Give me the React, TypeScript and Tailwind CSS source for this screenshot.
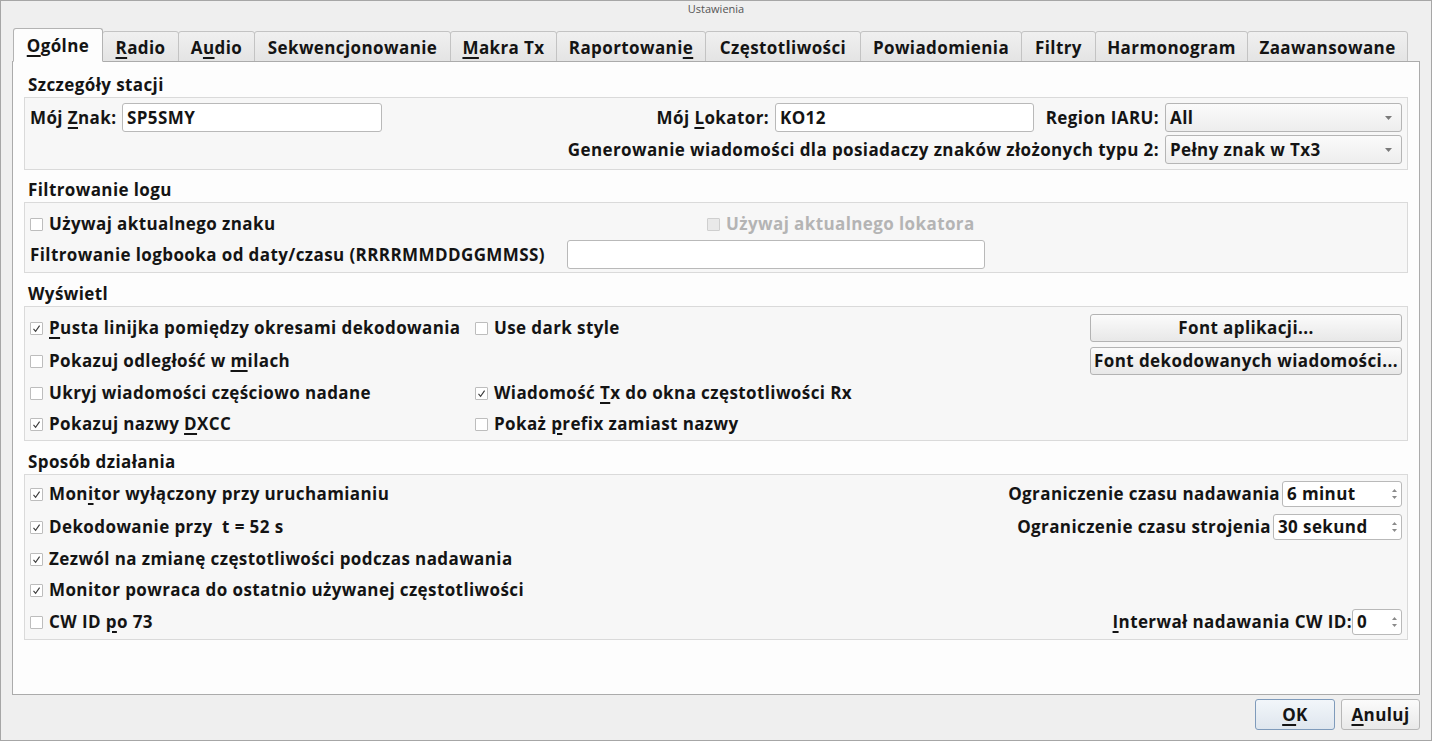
import React from 'react';

const U: React.FC<{ children: React.ReactNode }> = ({ children }) => (
    <span className="underline decoration-2 underline-offset-[3px]">{children}</span>
);

const CheckBox: React.FC<{ checked?: boolean; disabled?: boolean; children: React.ReactNode }> = ({ checked, disabled, children }) => (
    <div className={`flex items-center gap-[6px] whitespace-nowrap ${disabled ? 'text-[#b4b4b4]' : ''}`}>
        <span className={`w-[13px] h-[13px] border rounded-[1px] flex items-center justify-center ${disabled ? 'bg-[#e9e9e9] border-[#cfcfcf]' : 'bg-white border-[#bdbdbd]'}`}>
            {checked && (
                <svg width="9" height="9" viewBox="0 0 9 9">
                    <path d="M1.5 4.8 L3.6 7.4 L7.6 1.6" fill="none" stroke="#3a3a3a" strokeWidth="1.1" />
                </svg>
            )}
        </span>
        <span>{children}</span>
    </div>
);

const TextBox: React.FC<{ value?: string; className?: string }> = ({ value, className }) => (
    <div className={`h-[29px] border border-[#b9b9b9] rounded-[3px] bg-white px-[4px] flex items-center ${className ?? ''}`}>
        {value}
    </div>
);

const Combo: React.FC<{ value: string }> = ({ value }) => (
    <div className="w-[237px] h-[29px] border border-[#b5b5b5] rounded-[3px] bg-gradient-to-b from-[#fbfbfb] to-[#ededed] pl-[4px] pr-[9px] flex items-center justify-between">
        <span>{value}</span>
        <svg width="7" height="4" viewBox="0 0 7 4">
            <path d="M0 0 L7 0 L3.5 4 Z" fill="#7a7a7a" />
        </svg>
    </div>
);

const SpinBox: React.FC<{ value: string; className: string }> = ({ value, className }) => (
    <div className={`h-[26px] border border-[#b9b9b9] rounded-[3px] bg-white pl-[4px] pr-[3px] flex items-center justify-between ${className}`}>
        <span>{value}</span>
        <svg width="7" height="14" viewBox="0 0 7 14">
            <path d="M1 5 L3.5 2 L6 5 Z" fill="#8a8a8a" />
            <path d="M1 9 L3.5 12 L6 9 Z" fill="#8a8a8a" />
        </svg>
    </div>
);

const Section: React.FC<{ title: string; frame: string; children: React.ReactNode }> = ({ title, frame, children }) => (
    <div>
        <div className="h-[24px] flex items-center pl-[15px]">{title}</div>
        <div className={`mx-[11px] border border-[#dadada] bg-[#f7f7f7] ${frame}`}>{children}</div>
    </div>
);

const tabs: { label: React.ReactNode; w: string }[] = [
    { label: <><U>O</U>gólne</>, w: 'w-[90px]' },
    { label: <><U>R</U>adio</>, w: 'w-[77px]' },
    { label: <>A<U>u</U>dio</>, w: 'w-[77px]' },
    { label: 'Sekwencjonowanie', w: 'w-[197px]' },
    { label: <><U>M</U>akra Tx</>, w: 'w-[107px]' },
    { label: <>Raportowani<U>e</U></>, w: 'w-[150px]' },
    { label: 'Częstotliwości', w: 'w-[156px]' },
    { label: 'Powiadomienia', w: 'w-[162px]' },
    { label: 'Filtry', w: 'w-[75px]' },
    { label: 'Harmonogram', w: 'w-[153px]' },
    { label: 'Zaawansowane', w: 'w-[161px]' },
];

const btn = 'border border-[#b3b3b3] rounded-[3px] bg-gradient-to-b from-[#fbfbfb] to-[#e8e8e8] font-bold whitespace-nowrap';

const App: React.FC = () => {
    return (
        <div className="w-[1432px] h-[741px] bg-[#efefef] border border-[#a6a6a6] flex flex-col font-['Open_Sans','Noto_Sans',sans-serif] font-bold text-[17px] tracking-[0.4px] text-[#141414] overflow-hidden">
            {/* Title bar */}
            <div className="h-[17px] flex items-center justify-center text-[11px] font-normal tracking-normal text-[#555]">Ustawienia</div>

            {/* Tabs */}
            <div className="mt-[11px] pl-[12px] flex items-end h-[33px]">
                {tabs.map((t, i) => (
                    <div
                        key={i}
                        className={`${t.w} flex items-center justify-center pt-[2px] border rounded-t-[3px] -ml-px first:ml-0 whitespace-nowrap ${i === 0 ? 'h-[34px] bg-[#fdfdfd] border-[#b3b3b3] border-b-[#fdfdfd] relative z-10' : 'h-[31px] border-[#c3c3c3] bg-gradient-to-b from-[#f0f0f0] to-[#e4e4e4]'}`}
                    >
                        {t.label}
                    </div>
                ))}
            </div>

            {/* Pane */}
            <div className="mx-[11px] -mt-px h-[634px] border border-[#ababab] bg-[#fdfdfd] pt-[11px]">
                <Section title="Szczegóły stacji" frame="h-[73px] px-[5px] pt-[5px] flex flex-col gap-[3px]">
                    <div className="flex items-center h-[29px]">
                        <div className="w-[92px] whitespace-nowrap">Mój <U>Z</U>nak:</div>
                        <TextBox value="SP5SMY" className="w-[260px]" />
                        <div className="flex-1 text-right pr-[6px] whitespace-nowrap">Mój <U>L</U>okator:</div>
                        <TextBox value="KO12" className="w-[259px]" />
                        <div className="w-[131px] text-right pr-[6px] whitespace-nowrap">Region IARU:</div>
                        <Combo value="All" />
                    </div>
                    <div className="flex items-center h-[29px]">
                        <div className="flex-1 text-right pr-[6px] whitespace-nowrap">Generowanie wiadomości dla posiadaczy znaków złożonych typu 2:</div>
                        <Combo value="Pełny znak w Tx3" />
                    </div>
                </Section>

                <div className="h-[8px]" />
                <Section title="Filtrowanie logu" frame="h-[71px] px-[5px] pt-[5px]">
                    <div className="flex items-center h-[32px]">
                        <div className="w-[677px]">
                            <CheckBox>Używaj aktualnego znaku</CheckBox>
                        </div>
                        <CheckBox disabled>Używaj aktualnego lokatora</CheckBox>
                    </div>
                    <div className="flex items-center h-[29px]">
                        <div className="w-[537px] whitespace-nowrap">Filtrowanie logbooka od daty/czasu (RRRRMMDDGGMMSS)</div>
                        <TextBox className="w-[418px]" />
                    </div>
                </Section>

                <div className="h-[9px]" />
                <Section title="Wyświetl" frame="h-[135px] px-[5px] pt-[5px]">
                    <div className="grid grid-cols-[445px_615px_312px] grid-rows-[32px_34px_30px_32px] items-center">
                        <CheckBox checked><U>P</U>usta linijka pomiędzy okresami dekodowania</CheckBox>
                        <CheckBox>Use dark style</CheckBox>
                        <button className={`h-[28px] ${btn}`}>Font aplikacji...</button>

                        <CheckBox>Pokazuj odległość w <U>m</U>ilach</CheckBox>
                        <div />
                        <button className={`h-[28px] ${btn}`}>Font dekodowanych wiadomości...</button>

                        <CheckBox>Ukryj wiadomości częściowo nadane</CheckBox>
                        <CheckBox checked>Wiadomość <U>T</U>x do okna częstotliwości Rx</CheckBox>
                        <div />

                        <CheckBox checked>Pokazuj nazwy <U>D</U>XCC</CheckBox>
                        <CheckBox>Pokaż <U>p</U>refix zamiast nazwy</CheckBox>
                        <div />
                    </div>
                </Section>

                <div className="h-[9px]" />
                <Section title="Sposób działania" frame="h-[166px] px-[5px] pt-[3px]">
                    <div className="flex items-center justify-between h-[32px]">
                        <CheckBox checked>Mon<U>i</U>tor wyłączony przy uruchamianiu</CheckBox>
                        <div className="flex items-center gap-[2px]">
                            <span className="whitespace-nowrap">Ograniczenie czasu nadawania</span>
                            <SpinBox value="6 minut" className="w-[120px]" />
                        </div>
                    </div>
                    <div className="flex items-center justify-between h-[34px]">
                        <CheckBox checked>Dekodowanie przy&nbsp; t = 52 s</CheckBox>
                        <div className="flex items-center gap-[2px]">
                            <span className="whitespace-nowrap">Ograniczenie czasu strojenia</span>
                            <SpinBox value="30 sekund" className="w-[129px]" />
                        </div>
                    </div>
                    <div className="flex items-center h-[30px]">
                        <CheckBox checked>Zezwól na zmianę częstotliwości podczas nadawania</CheckBox>
                    </div>
                    <div className="flex items-center h-[32px]">
                        <CheckBox checked>Monitor powraca do ostatnio używanej częstotliwości</CheckBox>
                    </div>
                    <div className="flex items-center justify-between h-[32px]">
                        <CheckBox>CW ID <U>p</U>o 73</CheckBox>
                        <div className="flex items-center">
                            <span className="whitespace-nowrap"><U>I</U>nterwał nadawania CW ID:</span>
                            <SpinBox value="0" className="w-[50px]" />
                        </div>
                    </div>
                </Section>
            </div>

            {/* Footer */}
            <div className="flex justify-end gap-[6px] pr-[11px] pt-[4px]">
                <button className="w-[80px] h-[31px] border border-[#7f9bbb] rounded-[3px] bg-gradient-to-b from-[#f2f6fa] to-[#dfe6ee] font-bold">
                    <U>O</U>K
                </button>
                <button className="w-[79px] h-[31px] border border-[#b7b7b7] rounded-[3px] bg-gradient-to-b from-[#fbfbfb] to-[#e9e9e9] font-bold">
                    <U>A</U>nuluj
                </button>
            </div>
        </div>
    );
};

export default App;
